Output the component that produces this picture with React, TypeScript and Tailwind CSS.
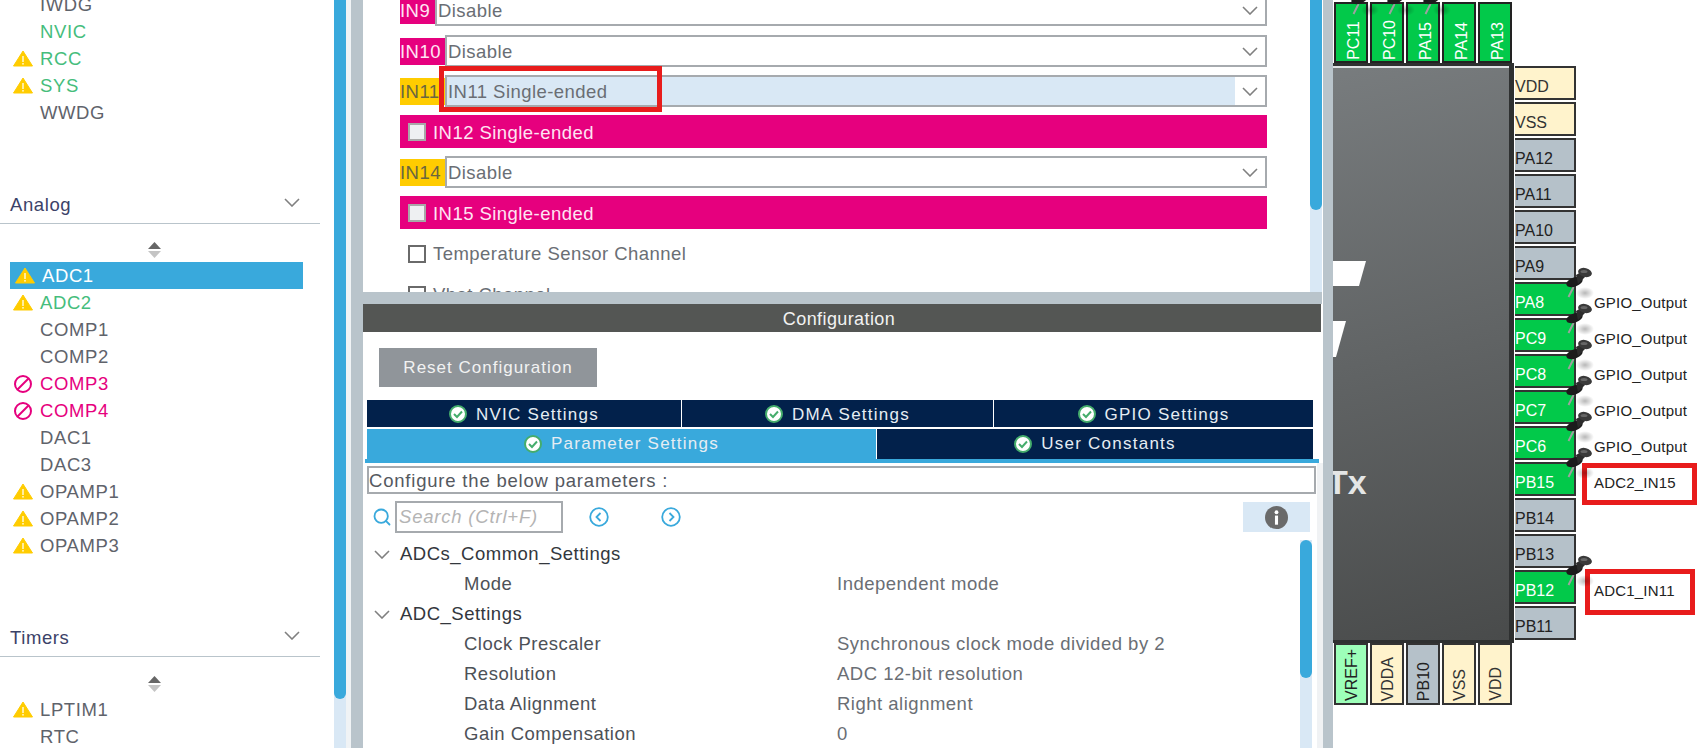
import React from 'react';
import { Search } from 'lucide-react';

type SideItem = { name: string; icon?: 'warn' | 'ban'; tone?: 'green' | 'pink'; selected?: boolean };

const systemItems: SideItem[] = [
  { name: 'IWDG' },
  { name: 'NVIC', tone: 'green' },
  { name: 'RCC', icon: 'warn', tone: 'green' },
  { name: 'SYS', icon: 'warn', tone: 'green' },
  { name: 'WWDG' },
];

const analogItems: SideItem[] = [
  { name: 'ADC1', icon: 'warn', selected: true },
  { name: 'ADC2', icon: 'warn', tone: 'green' },
  { name: 'COMP1' },
  { name: 'COMP2' },
  { name: 'COMP3', icon: 'ban', tone: 'pink' },
  { name: 'COMP4', icon: 'ban', tone: 'pink' },
  { name: 'DAC1' },
  { name: 'DAC3' },
  { name: 'OPAMP1', icon: 'warn' },
  { name: 'OPAMP2', icon: 'warn' },
  { name: 'OPAMP3', icon: 'warn' },
];

const timerItems: SideItem[] = [{ name: 'LPTIM1', icon: 'warn' }, { name: 'RTC' }];

type PinKind = 'green' | 'gray' | 'cream' | 'mint';

const pinColors: Record<PinKind, string> = {
  green: 'bg-[#02c94a] text-white',
  gray: 'bg-[#b5c1c9] text-[#222222]',
  cream: 'bg-[#fff3cc] text-[#333333]',
  mint: 'bg-[#9dffb9] text-[#222222]',
};

const topPins: { name: string; kind: PinKind; pinned?: boolean }[] = [
  { name: 'PC11', kind: 'green', pinned: true },
  { name: 'PC10', kind: 'green', pinned: true },
  { name: 'PA15', kind: 'green', pinned: true },
  { name: 'PA14', kind: 'green' },
  { name: 'PA13', kind: 'green' },
];

const bottomPins: { name: string; kind: PinKind }[] = [
  { name: 'VREF+', kind: 'mint' },
  { name: 'VDDA', kind: 'cream' },
  { name: 'PB10', kind: 'gray' },
  { name: 'VSS', kind: 'cream' },
  { name: 'VDD', kind: 'cream' },
];

const rightPins: { name: string; kind: PinKind; label?: string; pinned?: boolean; box?: 'a' | 'b' }[] = [
  { name: 'VDD', kind: 'cream' },
  { name: 'VSS', kind: 'cream' },
  { name: 'PA12', kind: 'gray' },
  { name: 'PA11', kind: 'gray' },
  { name: 'PA10', kind: 'gray' },
  { name: 'PA9', kind: 'gray' },
  { name: 'PA8', kind: 'green', label: 'GPIO_Output', pinned: true },
  { name: 'PC9', kind: 'green', label: 'GPIO_Output', pinned: true },
  { name: 'PC8', kind: 'green', label: 'GPIO_Output', pinned: true },
  { name: 'PC7', kind: 'green', label: 'GPIO_Output', pinned: true },
  { name: 'PC6', kind: 'green', label: 'GPIO_Output', pinned: true },
  { name: 'PB15', kind: 'green', label: 'ADC2_IN15', pinned: true, box: 'a' },
  { name: 'PB14', kind: 'gray' },
  { name: 'PB13', kind: 'gray' },
  { name: 'PB12', kind: 'green', label: 'ADC1_IN11', pinned: true, box: 'b' },
  { name: 'PB11', kind: 'gray' },
];

const tree = [
  { label: 'ADCs_Common_Settings', parent: true },
  { label: 'Mode', value: 'Independent mode' },
  { label: 'ADC_Settings', parent: true },
  { label: 'Clock Prescaler', value: 'Synchronous clock mode divided by 2' },
  { label: 'Resolution', value: 'ADC 12-bit resolution' },
  { label: 'Data Alignment', value: 'Right alignment' },
  { label: 'Gain Compensation', value: '0' },
];

const Chevron = ({ className = '' }: { className?: string }) => (
  <svg width="16" height="9" viewBox="0 0 16 9" fill="none" stroke="#808080" strokeWidth="1.6" className={className}>
    <polyline points="1,1 8,8 15,1" />
  </svg>
);

const WarnIcon = () => (
  <svg width="20" height="17" viewBox="0 0 20 17">
    <path d="M10 1 L19.5 16 H0.5 Z" fill="#ffcc00" stroke="#ffcc00" strokeWidth="1" strokeLinejoin="round" />
    <rect x="9.2" y="6" width="1.6" height="6" fill="#fff6c8" />
    <rect x="9.2" y="13" width="1.6" height="1.6" fill="#fff6c8" />
  </svg>
);

const BanIcon = () => (
  <svg width="20" height="20" viewBox="0 0 20 20" fill="none" stroke="#e6007e" strokeWidth="2">
    <circle cx="10" cy="10" r="8" />
    <line x1="4.5" y1="15.5" x2="15.5" y2="4.5" />
  </svg>
);

const SortArrows = () => (
  <div className="flex h-[27px] items-center justify-center pr-[25px]">
    <svg width="13" height="16" viewBox="0 0 13 16">
      <path d="M6.5 0 L13 7 H0 Z" fill="#666666" />
      <path d="M6.5 16 L13 9 H0 Z" fill="#c4c4c4" />
    </svg>
  </div>
);

const SideRow = ({ item }: { item: SideItem }) => {
  let textColor = 'text-[#5f636b]';
  if (item.tone === 'green') textColor = 'text-[#45bd7c]';
  if (item.tone === 'pink') textColor = 'text-[#e6007e]';
  if (item.selected) {
    return (
      <div className="ml-[10px] flex h-[27px] w-[293px] items-center bg-[#39a9dc] text-white">
        <span className="ml-[5px] mr-[7px] flex w-[20px]"><WarnIcon /></span>
        {item.name}
      </div>
    );
  }
  return (
    <div className={`flex h-[27px] items-center ${textColor}`}>
      <span className="ml-[13px] mr-[7px] flex w-[20px]">
        {item.icon === 'warn' && <WarnIcon />}
        {item.icon === 'ban' && <BanIcon />}
      </span>
      {item.name}
    </div>
  );
};

const SectionHeader = ({ title }: { title: string }) => (
  <div className="flex h-[37px] w-[320px] items-center justify-between border-b border-[#b9c4cb] pl-[10px] pr-[20px] text-[#3b4268]">
    {title}
    <Chevron className="-mt-[6px]" />
  </div>
);

const Sidebar = () => (
  <div className="flex w-[334px] shrink-0 flex-col overflow-hidden tracking-[0.6px]">
    <div className="-mt-[9px]">
      {systemItems.map((item) => <SideRow key={item.name} item={item} />)}
    </div>
    <div className="mt-[61px]"><SectionHeader title="Analog" /></div>
    <div className="mt-[12px]"><SortArrows /></div>
    <div className="-mt-[1px]">
      {analogItems.map((item) => <SideRow key={item.name} item={item} />)}
    </div>
    <div className="mt-[61px]"><SectionHeader title="Timers" /></div>
    <div className="mt-[13px]"><SortArrows /></div>
    <div className="-mt-[1px]">
      {timerItems.map((item) => <SideRow key={item.name} item={item} />)}
    </div>
  </div>
);

const SelectRow = ({ label, value, labelWidth, warn, selected, className = '', children }: {
  label: string; value: string; labelWidth: string; warn?: boolean; selected?: boolean; className?: string; children?: React.ReactNode;
}) => (
  <div className={`relative flex h-[32px] w-[867px] items-center ${className}`}>
    <div className={`flex h-[27px] shrink-0 items-center pt-[1px] ${labelWidth} ${warn ? 'bg-[#ffcc00] text-[#6a6640]' : 'bg-[#e6007e] text-[#ffe4f3]'}`}>{label}</div>
    <div className="flex h-full min-w-0 flex-1 border-2 border-[#a6aaae] bg-white text-[#6a6e74]">
      <div className={`flex flex-1 items-center pl-[1px] pt-[2px] ${selected ? 'bg-[#d9e8f5]' : ''}`}>{value}</div>
      <div className="flex w-[30px] items-center justify-center"><Chevron /></div>
    </div>
    {children}
  </div>
);

const PinkRow = ({ label }: { label: string }) => (
  <div className="flex h-[33px] w-[867px] items-center bg-[#e6007e] pl-[8px] text-[#ffe4f3]">
    <span className="mr-[7px] h-[18px] w-[18px] border-2 border-[#a8a8a8] bg-[#eef0f2]" />
    <span className="pt-[2px]">{label}</span>
  </div>
);

const CheckRow = ({ label, className = '' }: { label: string; className?: string }) => (
  <div className={`flex h-[18px] items-center pl-[8px] text-[#6a6e74] ${className}`}>
    <span className="mr-[7px] h-[18px] w-[18px] border-2 border-[#6a6a6a] bg-white" />
    {label}
  </div>
);

const ChannelPanel = () => (
  <div className="flex h-[292px] overflow-hidden">
    <div className="-mt-[6px] flex-1 pl-[37px]">
      <SelectRow label="IN9" value="Disable" labelWidth="w-[35px]" className="mb-[9px]" />
      <SelectRow label="IN10" value="Disable" labelWidth="w-[45px]" className="mb-[8px]" />
      <SelectRow label="IN11" value="IN11 Single-ended" labelWidth="w-[45px]" warn selected className="mb-[8px]">
        <div className="absolute left-[39px] top-[-9px] h-[46px] w-[223px] border-[5px] border-[#e81c1c]" />
      </SelectRow>
      <div className="mb-[8px]"><PinkRow label="IN12 Single-ended" /></div>
      <SelectRow label="IN14" value="Disable" labelWidth="w-[45px]" warn className="mb-[8px]" />
      <PinkRow label="IN15 Single-ended" />
      <CheckRow label="Temperature Sensor Channel" className="mt-[16px]" />
      <CheckRow label="Vbat Channel" className="mt-[23px]" />
    </div>
    <div className="w-[12px] shrink-0 bg-[#d9e8f5]">
      <div className="h-[210px] rounded-b-full bg-[#39a9dc]" />
    </div>
    <div className="w-[1px] shrink-0" />
  </div>
);

const CheckBadge = () => (
  <svg width="18" height="18" viewBox="0 0 18 18">
    <circle cx="9" cy="9" r="8" fill="#ffffff" stroke="#45ad6c" strokeWidth="2" />
    <polyline points="5,9 8,12 13,6.5" fill="none" stroke="#45ad6c" strokeWidth="2" />
  </svg>
);

const Tab = ({ label, className = '', active, low }: { label: string; className?: string; active?: boolean; low?: boolean }) => (
  <div className={`flex items-center justify-center gap-[9px] tracking-[1.25px] text-[17px] text-[#e6edf3] ${active ? 'bg-[#39a9dc]' : 'bg-[#02214b]'} ${className}`}>
    <CheckBadge />
    <span className={low ? 'pt-[3px]' : ''}>{label}</span>
  </div>
);

const NavButton = ({ dir }: { dir: 'left' | 'right' }) => (
  <svg width="20" height="20" viewBox="0 0 20 20" fill="none" stroke="#39a9dc" strokeWidth="1.8" className="block">
    <circle cx="10" cy="10" r="8.8" />
    <polyline points={dir === 'left' ? '11.5,6 7.5,10 11.5,14' : '8.5,6 12.5,10 8.5,14'} />
  </svg>
);

const ConfigPanel = () => (
  <div className="flex min-h-0 flex-1 flex-col overflow-hidden">
    <div className="flex h-[28px] w-[958px] shrink-0 items-center justify-center bg-[#545654] pr-[6px] pt-[2px] text-[18px] tracking-[0.4px] text-[#f2f2f2]">Configuration</div>
    <div className="ml-[16px] mt-[16px] flex h-[39px] w-[218px] shrink-0 items-center justify-center bg-[#90959a] text-[17px] tracking-[1px] text-[#f2f2f2]">Reset Configuration</div>
    <div className="ml-[4px] mt-[13px] flex h-[27px] w-[946px] shrink-0 gap-[1px]">
      <Tab label="NVIC Settings" className="w-[314px]" low />
      <Tab label="DMA Settings" className="w-[311px]" low />
      <Tab label="GPIO Settings" className="flex-1" low />
    </div>
    <div className="ml-[4px] mt-[2px] flex h-[30px] w-[946px] shrink-0 gap-[1px]">
      <Tab label="Parameter Settings" className="w-[509px]" active />
      <Tab label="User Constants" className="flex-1" />
    </div>
    <div className="ml-[2px] h-[4px] w-[954px] shrink-0 bg-[#39a9dc]" />
    <div className="flex min-h-0 flex-1">
      <div className="flex min-w-0 flex-1 flex-col">
        <div className="ml-[4px] mt-[3px] flex h-[28px] w-[949px] shrink-0 items-center border-2 border-[#a6aaae] pt-[2px] tracking-[0.8px] text-[#55595f]">Configure the below parameters :</div>
        <div className="mt-[7px] flex h-[32px] shrink-0 items-center pl-[9px]">
          <Search size={20} color="#39a9dc" strokeWidth={2.2} className="mr-[3px] shrink-0" />
          <div className="flex h-full w-[168px] shrink-0 items-center border-2 border-[#a6aaae] pl-[2px] italic tracking-[0.8px] text-[#b4b4b4]">Search (Ctrl+F)</div>
          <div className="ml-[26px]"><NavButton dir="left" /></div>
          <div className="ml-[52px]"><NavButton dir="right" /></div>
          <div className="ml-[562px] flex h-[30px] w-[67px] shrink-0 items-center justify-center bg-[#d9e8f5]">
            <svg width="23" height="23" viewBox="0 0 24 24">
              <circle cx="12" cy="12" r="12" fill="#6a6a6a" />
              <circle cx="12" cy="6.5" r="2" fill="#ffffff" />
              <rect x="10.4" y="10" width="3.2" height="9.5" fill="#ffffff" />
            </svg>
          </div>
        </div>
        <div className="mt-[6px] flex min-h-0 flex-1">
          <div className="flex-1 pl-[11px] tracking-[0.5px]">
            {tree.map((row) => (
              <div key={row.label} className="flex h-[30px] items-center">
                {row.parent ? (
                  <>
                    <Chevron className="mr-[10px] shrink-0" />
                    <span className="text-[#33373d]">{row.label}</span>
                  </>
                ) : (
                  <>
                    <span className="ml-[90px] w-[373px] shrink-0 text-[#4d5157]">{row.label}</span>
                    <span className="text-[#6a6e74]">{row.value}</span>
                  </>
                )}
              </div>
            ))}
          </div>
          <div className="mr-[5px] mt-[1px] w-[12px] shrink-0 bg-[#d9e8f5]">
            <div className="h-[138px] rounded-full bg-[#39a9dc]" />
          </div>
        </div>
      </div>
      <div className="w-[6px] shrink-0 bg-[#f0f2f4]" />
    </div>
  </div>
);

const PushPin = ({ className = '' }: { className?: string }) => (
  <svg width="34" height="34" viewBox="0 0 34 34" className={`pointer-events-none absolute z-10 ${className}`}>
    <defs>
      <radialGradient id="pinShadow">
        <stop offset="0%" stopColor="#000000" stopOpacity="0.28" />
        <stop offset="100%" stopColor="#000000" stopOpacity="0" />
      </radialGradient>
    </defs>
    <ellipse cx="20" cy="26" rx="9" ry="6" fill="url(#pinShadow)" />
    <line x1="3.5" y1="30" x2="8.5" y2="20" stroke="#a0a0a0" strokeWidth="2" />
    <ellipse cx="9.5" cy="15" rx="8.5" ry="4.5" transform="rotate(-20 9.5 15)" fill="#1c1c1c" />
    <path d="M11 8 L18 4 L20 10 L13 17 Z" fill="#2c2c2c" />
    <ellipse cx="20" cy="5.5" rx="7" ry="4.5" transform="rotate(15 20 5.5)" fill="#3a3a3a" />
    <ellipse cx="19" cy="4.5" rx="3.5" ry="1.6" fill="#666666" />
  </svg>
);

const ChipBody = () => (
  <div className="relative h-[580px] w-[181px] shrink-0 overflow-hidden border-b-[3px] border-r-[5px] border-t-[3px] border-[#2e3030] bg-[linear-gradient(165deg,#787c7e,#494b4b)]">
    <div className="h-[2px] bg-[#dfe2e4]" />
    <svg width="40" height="100" viewBox="0 0 40 100" className="absolute left-0 top-[195px]">
      <polygon points="0,0 33,0 26,25 0,25" fill="#ffffff" />
      <polygon points="0,60 13,60 3,96 0,96" fill="#ffffff" />
    </svg>
    <div className="absolute left-[-6px] top-[396px] text-[34px] font-bold leading-[40px] tracking-normal text-[#e4e6e6]">Tx</div>
  </div>
);

const ChipDiagram = () => (
  <div className="flex min-w-0 flex-1 flex-col text-[16px] tracking-normal">
    <div className="ml-[1px] mt-[2px] flex h-[61px] gap-[2px]">
      {topPins.map((pin) => (
        <div key={pin.name} className={`relative flex w-[34px] items-end justify-center border-2 border-[#222222] pb-[1px] pl-[5px] ${pinColors[pin.kind]}`}>
          {pin.pinned && <PushPin className="left-[14px] top-[-20px]" />}
          <span className="rotate-180 leading-none [writing-mode:vertical-rl]">{pin.name}</span>
        </div>
      ))}
    </div>
    <div className="flex">
      <ChipBody />
      <div className="ml-[1px] flex flex-col gap-[2px] pt-[3px]">
        {rightPins.map((pin) => (
          <div key={pin.name} className="relative flex h-[34px] w-[189px] items-center">
            <div className={`relative flex h-full w-[61px] shrink-0 items-center border-y-2 border-r-2 border-[#333333] pt-[8px] ${pinColors[pin.kind]}`}>
              {pin.name}
            </div>
            {pin.pinned && <PushPin className="left-[50px] top-[-15px]" />}
            {pin.label && <span className="ml-[18px] whitespace-nowrap pt-[8px] text-[15px] tracking-[0.2px] text-[#222222]">{pin.label}</span>}
            {pin.box === 'a' && <div className="absolute left-[67px] top-[1px] h-[42px] w-[115px] border-[5px] border-[#e81c1c]" />}
            {pin.box === 'b' && <div className="absolute left-[70px] top-[-1px] h-[46px] w-[110px] border-[5px] border-[#e81c1c]" />}
          </div>
        ))}
      </div>
    </div>
    <div className="ml-[1px] flex h-[62px] gap-[2px]">
      {bottomPins.map((pin) => (
        <div key={pin.name} className={`flex w-[34px] items-end justify-center border-2 border-[#333333] pb-[2px] pl-[2px] ${pinColors[pin.kind]}`}>
          <span className="rotate-180 leading-none [writing-mode:vertical-rl]">{pin.name}</span>
        </div>
      ))}
    </div>
  </div>
);

export default function App() {
  return (
    <div className="flex h-[748px] w-[1704px] overflow-hidden bg-white font-['Liberation_Sans',sans-serif] text-[18.5px] tracking-[0.45px]">
      <Sidebar />
      <div className="w-[12px] shrink-0 bg-[#d9e8f5]">
        <div className="h-[699px] rounded-b-full bg-[#39a9dc]" />
      </div>
      <div className="w-[5px] shrink-0 bg-[#f0f3f5]" />
      <div className="w-[12px] shrink-0 bg-[#b9c4cb]" />
      <div className="flex w-[960px] shrink-0 flex-col">
        <ChannelPanel />
        <div className="h-[12px] w-[959px] shrink-0 bg-[#b9c4cb]" />
        <ConfigPanel />
      </div>
      <div className="w-[10px] shrink-0 bg-[#b9c4cb]" />
      <ChipDiagram />
    </div>
  );
}
